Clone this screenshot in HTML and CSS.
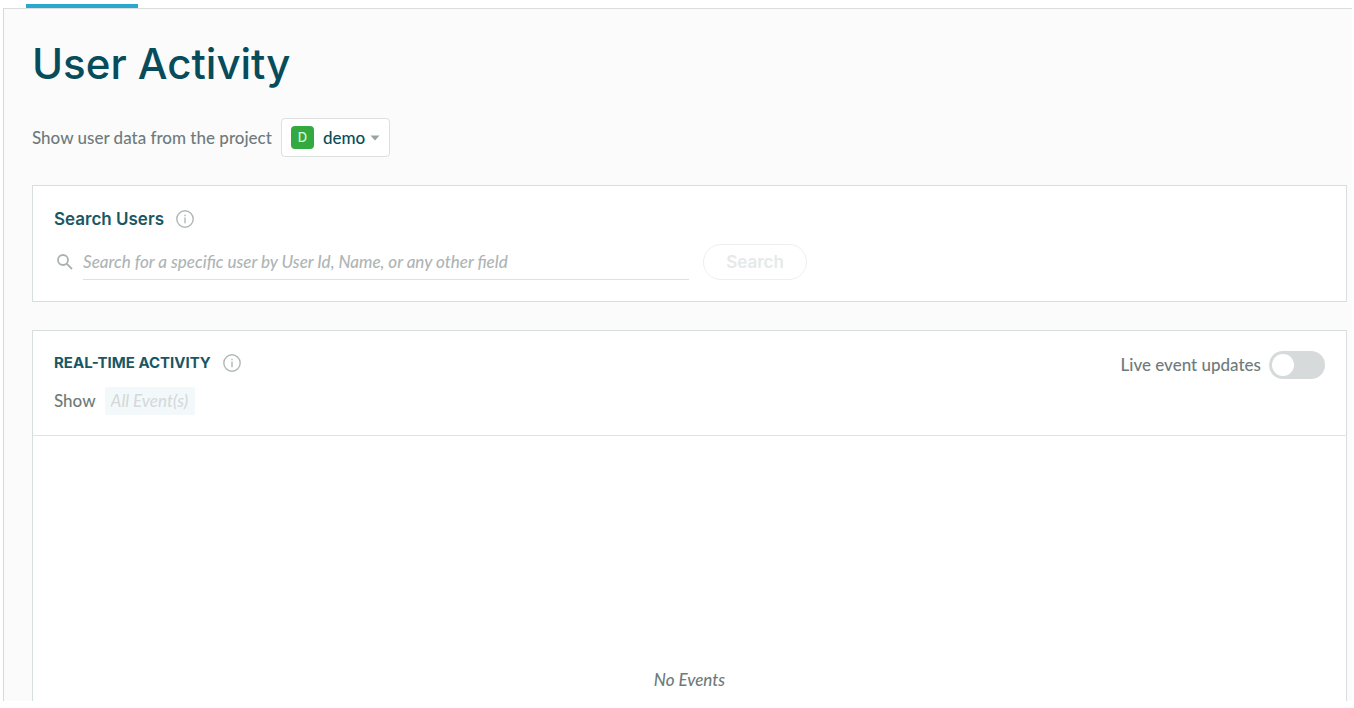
FILE: index.html
```html
<!DOCTYPE html>
<html lang="en">
<head>
  <meta charset="UTF-8">
  <title>User Activity</title>
  <meta name="viewport" content="width=device-width, initial-scale=1">
  <link rel="stylesheet" href="styles.css">
</head>
<body>

  <nav class="tabs">
    <a class="tab active" href="#activity" aria-label="User Activity"></a>
  </nav>

  <main id="activity">
    <h1>User Activity</h1>

    <div class="project-row">
      <label for="project">Show user data from the project</label>
      <div class="project-picker">
        <span class="badge">D</span>
        <select id="project">
          <option>demo</option>
        </select>
        <svg class="caret" viewBox="0 0 10 6" aria-hidden="true"><path d="M0.5 0.5h9L5 5.5z"/></svg>
      </div>
    </div>

    <section class="card search-card">
      <div class="card-title">
        <h2>Search Users</h2>
        <svg class="info" viewBox="0 0 18 18" aria-hidden="true">
          <circle cx="9" cy="9" r="8.2"/>
          <path d="M9 7.6v5.6M9 4.8v1.4"/>
        </svg>
      </div>
      <form class="search-form">
        <svg class="magnifier" viewBox="0 0 16 16" aria-hidden="true">
          <circle cx="6" cy="6" r="5"/>
          <path d="M9.6 9.6l5.4 5.4"/>
        </svg>
        <input type="text" aria-label="Search users" placeholder="Search for a specific user by User Id, Name, or any other field">
        <button type="submit" disabled>Search</button>
      </form>
    </section>

    <section class="card events-card">
      <div class="events-header">
        <div>
          <div class="card-title">
            <h2 class="caps">Real-time activity</h2>
            <svg class="info" viewBox="0 0 18 18" aria-hidden="true">
              <circle cx="9" cy="9" r="8.2"/>
              <path d="M9 7.6v5.6M9 4.8v1.4"/>
            </svg>
          </div>
          <div class="filter">
            <label for="events">Show</label>
            <select id="events" disabled>
              <option>All Event(s)</option>
            </select>
          </div>
        </div>
        <div class="live">
          <label for="live">Live event updates</label>
          <input id="live" class="switch" type="checkbox">
        </div>
      </div>
      <p class="empty">No Events</p>
    </section>
  </main>

</body>
</html>
```
FILE: styles.css
```css
* { box-sizing: border-box; }

body {
  font-family: Lato, sans-serif;
  font-size: 17px;
  line-height: 24px;
  font-weight: 500;
  color: #6f7b7b;
  background: #fff;
  margin: 0;
  padding: 4px 2px 7px 3px;
  min-height: 100vh;
  display: flex;
  flex-direction: column;
}

h1, h2, p { margin: 0; }

select, input, button {
  font: inherit;
  margin: 0;
}

.tabs {
  display: flex;
  padding-left: 23px;
}

.tab {
  width: 112px;
  height: 4px;
}

.tab.active {
  background: #2ba8cb;
}

main {
  flex: 1;
  display: flex;
  flex-direction: column;
  background: #fbfbfb;
  border-top: 1px solid #dadddd;
  border-left: 1px solid #d5dada;
  padding: 31px 5px 0 28px;
}

h1 {
  font-family: Inter, sans-serif;
  font-size: 42px;
  line-height: 48px;
  font-weight: 500;
  color: #074c5a;
}

.project-row {
  display: flex;
  align-items: center;
  gap: 9px;
  margin-top: 30px;
}

.project-picker {
  display: flex;
  align-items: center;
  height: 39px;
  padding: 0 9px;
  background: #fff;
  border: 1px solid #dde0e0;
  border-radius: 4px;
}

.badge {
  width: 23px;
  height: 23px;
  margin-right: 9px;
  border-radius: 4px;
  background: #33aa3f;
  color: #d9f3dc;
  font-family: Inter, sans-serif;
  font-size: 13px;
  line-height: 23px;
  text-align: center;
}

.project-picker select {
  appearance: none;
  border: none;
  background: none;
  padding: 0;
  color: #074c5a;
}

.caret {
  width: 10px;
  height: 6px;
  margin-left: 4px;
  fill: #9aa3a3;
}

.card {
  background: #fff;
  border: 1px solid #d8dddd;
  margin-top: 28px;
}

.card-title {
  display: flex;
  align-items: center;
  gap: 12px;
}

h2 {
  font-family: Inter, sans-serif;
  font-size: 17px;
  line-height: 24px;
  font-weight: 600;
  color: #1a5765;
}

h2.caps {
  font-size: 15px;
  font-weight: 700;
  text-transform: uppercase;
}

.info {
  width: 18px;
  height: 18px;
  fill: none;
  stroke: #b0b7b7;
  stroke-width: 1.4;
}

.search-card {
  padding: 21px;
}

.search-form {
  display: flex;
  align-items: center;
  margin-top: 13px;
}

.magnifier {
  width: 16px;
  height: 16px;
  margin: 0 10px 0 3px;
  fill: none;
  stroke: #aab1b1;
  stroke-width: 1.8;
}

.search-form input {
  width: calc(48% - 4px);
  height: 36px;
  padding: 0;
  border: none;
  border-bottom: 1px solid #dde1e1;
  background: none;
}

.search-form input::placeholder {
  color: #aeb5b5;
  font-style: italic;
}

.search-form button {
  width: 104px;
  height: 36px;
  margin-left: 14px;
  border: 1px solid #edefef;
  border-radius: 18px;
  background: #fff;
  color: #e6e9e9;
  font-family: Inter, sans-serif;
  font-weight: 600;
}

.events-card {
  flex: 1;
  border-bottom: none;
}

.events-header {
  display: flex;
  justify-content: space-between;
  align-items: flex-start;
  padding: 20px 21px;
  border-bottom: 1px solid #dfe3e3;
}

.filter {
  display: flex;
  align-items: center;
  gap: 9px;
  margin-top: 12px;
}

.filter select {
  appearance: none;
  height: 28px;
  padding: 0 6px;
  border: none;
  border-radius: 2px;
  background: #f3f9fb;
  color: #d5d9d9;
  opacity: 1;
  font-style: italic;
}

.live {
  display: flex;
  align-items: center;
  gap: 8px;
}

.switch {
  appearance: none;
  width: 56px;
  height: 28px;
  padding: 3px;
  border-radius: 14px;
  background: #d6dada;
}

.switch::before {
  content: "";
  display: block;
  width: 22px;
  height: 22px;
  border-radius: 50%;
  background: #fff;
}

.switch:checked {
  background: #2ba8cb;
}

.switch:checked::before {
  margin-left: auto;
}

.empty {
  padding-top: 232px;
  text-align: center;
  font-style: italic;
}
```
